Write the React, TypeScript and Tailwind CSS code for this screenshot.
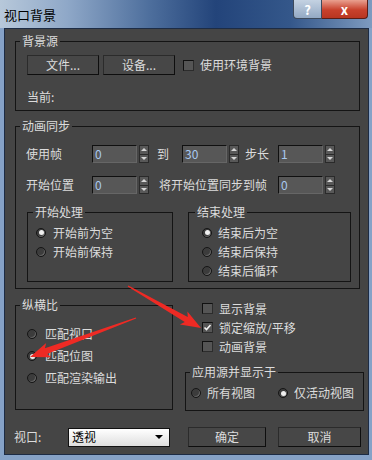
import React from 'react';

const Tri = ({ dir }: { dir: 'up' | 'down' }) =>
  dir === 'up' ? (
    <span className="w-0 h-0 border-x-[3px] border-x-transparent border-b-[3px] border-b-[#d6d6d6]" />
  ) : (
    <span className="w-0 h-0 border-x-[3px] border-x-transparent border-t-[3px] border-t-[#d6d6d6]" />
  );

const Spin = ({ value }: { value: string }) => (
  <div className="flex items-stretch h-[18px]">
    <div className="w-[45px] bg-[#575757] border border-[#101010] border-r-[#666] border-b-[#666] text-[12px] leading-[15px] pl-[2px] text-[#a8c9f0]">
      {value}
    </div>
    <div className="ml-[2px] w-[10px] flex flex-col bg-[#585858] border border-[#2a2a2a]">
      <div className="flex-1 flex items-center justify-center">
        <Tri dir="up" />
      </div>
      <div className="h-px bg-[#2a2a2a]" />
      <div className="flex-1 flex items-center justify-center">
        <Tri dir="down" />
      </div>
    </div>
  </div>
);

const Check = ({ on }: { on?: boolean }) => (
  <div className="w-[11px] h-[11px] shrink-0 bg-[#555] border border-[#111] border-r-[#2c2c2c] border-b-[#2c2c2c] flex items-center justify-center">
    {on && (
      <svg width="9" height="9" viewBox="0 0 9 9">
        <path d="M1.5 4.5 L3.5 6.5 L7.5 2" stroke="#f2f2f2" strokeWidth="1.6" fill="none" />
      </svg>
    )}
  </div>
);

const Radio = ({ on }: { on?: boolean }) => (
  <div className="w-[10px] h-[10px] shrink-0 rounded-full bg-[#3c3c3c] border border-[#151515] shadow-[inset_-1px_-1px_0_#666] flex items-center justify-center">
    {on && <div className="w-[5px] h-[5px] rounded-full bg-[#f0f0f0]" />}
  </div>
);

const Btn = ({ w, children }: { w: string; children: React.ReactNode }) => (
  <div
    className={`${w} h-[20px] shrink-0 bg-[#474747] border border-[#2b2b2b] border-r-[#0e0e0e] border-b-[#0e0e0e] flex items-center justify-center text-[12px] leading-[16px] text-[#dcdcdc]`}
  >
    {children}
  </div>
);

const Legend = ({ ml, children }: { ml: string; children: React.ReactNode }) => (
  <legend className={`${ml} px-[2px] text-[12px] leading-[16px] text-[#dcdcdc]`}>{children}</legend>
);

// 红色标注箭头
const Arrow = ({ x1, y1, x2, y2 }: { x1: number; y1: number; x2: number; y2: number }) => {
  const L = Math.hypot(x2 - x1, y2 - y1);
  const a = (Math.atan2(y2 - y1, x2 - x1) * 180) / Math.PI;
  const pts = `0,-0.6 ${L - 17},-3 ${L - 20},-7.5 ${L},0 ${L - 20},7.5 ${L - 17},3 0,0.6`;
  return <polygon points={pts} fill="#ee2a24" transform={`translate(${x1} ${y1}) rotate(${a})`} />;
};

export default function App() {
  return (
    <div className="relative w-[372px] h-[460px] overflow-hidden bg-[#86a2c7] font-['Microsoft_YaHei','Noto_Sans_CJK_SC','Noto_Sans',sans-serif] text-[#dcdcdc]">
      {/* 标题栏 */}
      <div className="h-[28px] flex items-start justify-between bg-[linear-gradient(90deg,#b7c8da_0%,#8fa8c8_18%,#4e6f9d_40%,#23447a_58%,#34578a_78%,#7e9bc0_100%)]">
        <div className="pl-[4px] pt-[6px] text-[13px] leading-[18px] text-black">视口背景</div>
        <div className="flex mr-[4px]">
          <div className="w-[29px] h-[19px] rounded-bl-[4px] border border-t-0 border-[#3d4a5c] bg-[linear-gradient(180deg,#c4d2e2,#93a9c4)] flex items-center justify-center text-white text-[13px] font-bold leading-none">
            ?
          </div>
          <div className="w-[46px] h-[19px] rounded-br-[4px] border border-t-0 border-l-0 border-[#5a1d16] bg-[linear-gradient(180deg,#e9a08f,#c8412c_55%,#b83520)] flex items-center justify-center text-white text-[13px] font-bold leading-none">
            x
          </div>
        </div>
      </div>

      {/* 对话框主体 */}
      <div className="ml-[4px] w-[365px] h-[427px] border border-[#1d2c45] bg-[#454545] pl-[10px] pt-[4px]">
        {/* 背景源 */}
        <fieldset className="w-[345px] border border-[#141414] px-0 pb-[5px]">
          <Legend ml="ml-[4px]">背景源</Legend>
          <div className="pl-[11px] pt-[6px]">
            <div className="flex items-center">
              <Btn w="w-[72px]">文件...</Btn>
              <div className="ml-[4px]">
                <Btn w="w-[72px]">设备...</Btn>
              </div>
              <div className="ml-[8px]">
                <Check />
              </div>
              <span className="ml-[6px] text-[12px] leading-[16px]">使用环境背景</span>
            </div>
            <div className="mt-[14px] text-[12px] leading-[16px]">当前:</div>
          </div>
        </fieldset>

        {/* 动画同步 */}
        <fieldset className="mt-[7px] w-[345px] border border-[#141414] px-0 pb-[6px]">
          <Legend ml="ml-[4px]">动画同步</Legend>
          <div className="pl-[10px] pt-[11px] text-[12px] leading-[16px]">
            <div className="flex items-center h-[18px]">
              <span className="w-[66px]">使用帧</span>
              <Spin value="0" />
              <span className="ml-[8px]">到</span>
              <div className="ml-[13px]">
                <Spin value="30" />
              </div>
              <span className="ml-[6px]">步长</span>
              <div className="ml-[9px]">
                <Spin value="1" />
              </div>
            </div>
            <div className="flex items-center h-[18px] mt-[13px]">
              <span className="w-[66px]">开始位置</span>
              <Spin value="0" />
              <span className="ml-[10px]">将开始位置同步到帧</span>
              <div className="ml-[11px]">
                <Spin value="0" />
              </div>
            </div>
            <div className="flex mt-[10px]">
              <fieldset className="ml-[1px] w-[146px] border border-[#141414] px-0 pb-[1px]">
                <Legend ml="ml-[5px]">开始处理</Legend>
                <div className="pl-[8px] pt-[3px]">
                  <div className="flex items-center h-[19px]">
                    <Radio on />
                    <span className="ml-[7px]">开始前为空</span>
                  </div>
                  <div className="flex items-center h-[19px]">
                    <Radio />
                    <span className="ml-[7px]">开始前保持</span>
                  </div>
                </div>
              </fieldset>
              <fieldset className="ml-[15px] w-[163px] border border-[#141414] px-0 pb-[1px]">
                <Legend ml="ml-[6px]">结束处理</Legend>
                <div className="pl-[13px] pt-[3px]">
                  <div className="flex items-center h-[19px]">
                    <Radio on />
                    <span className="ml-[6px]">结束后为空</span>
                  </div>
                  <div className="flex items-center h-[19px]">
                    <Radio />
                    <span className="ml-[6px]">结束后保持</span>
                  </div>
                  <div className="flex items-center h-[19px]">
                    <Radio />
                    <span className="ml-[6px]">结束后循环</span>
                  </div>
                </div>
              </fieldset>
            </div>
          </div>
        </fieldset>

        {/* 纵横比 + 右侧选项 */}
        <div className="flex items-start mt-[8px] text-[12px] leading-[16px]">
          <fieldset className="w-[158px] border border-[#141414] px-0 pb-[20px]">
            <Legend ml="ml-[4px]">纵横比</Legend>
            <div className="pl-[11px] pt-[10px]">
              <div className="flex items-center h-[22px]">
                <Radio />
                <span className="ml-[8px]">匹配视口</span>
              </div>
              <div className="flex items-center h-[22px]">
                <Radio on />
                <span className="ml-[8px]">匹配位图</span>
              </div>
              <div className="flex items-center h-[22px]">
                <Radio />
                <span className="ml-[8px]">匹配渲染输出</span>
              </div>
            </div>
          </fieldset>
          <div className="ml-[12px] w-[179px]">
            <div className="pl-[17px] mt-[2px]">
              <div className="flex items-center h-[19px]">
                <Check />
                <span className="ml-[6px]">显示背景</span>
              </div>
              <div className="flex items-center h-[19px]">
                <Check on />
                <span className="ml-[6px]">锁定缩放/平移</span>
              </div>
              <div className="flex items-center h-[19px]">
                <Check />
                <span className="ml-[6px]">动画背景</span>
              </div>
            </div>
            <fieldset className="mt-[8px] w-[179px] border border-[#141414] px-0 pb-[7px]">
              <Legend ml="ml-[4px]">应用源并显示于</Legend>
              <div className="pl-[5px] pt-[3px] flex items-center h-[23px]">
                <Radio />
                <span className="ml-[6px]">所有视图</span>
                <div className="ml-[23px]">
                  <Radio on />
                </div>
                <span className="ml-[6px]">仅活动视图</span>
              </div>
            </fieldset>
          </div>
        </div>

        {/* 底部 */}
        <div className="flex items-center h-[20px] mt-[16px] -ml-[1px] text-[12px] leading-[16px]">
          <span className="w-[54px]">视口:</span>
          <div className="w-[102px] h-[19px] border border-[#111] bg-[linear-gradient(180deg,#ffffff,#dedede)] flex items-center justify-between pl-[3px] pr-[6px] text-black">
            <span>透视</span>
            <span className="w-0 h-0 border-x-[4px] border-x-transparent border-t-[4px] border-t-black" />
          </div>
          <div className="ml-[18px]">
            <Btn w="w-[78px]">确定</Btn>
          </div>
          <div className="ml-[12px]">
            <Btn w="w-[83px]">取消</Btn>
          </div>
        </div>
      </div>

      {/* 标注箭头 */}
      <svg className="absolute inset-0 pointer-events-none" width="372" height="460" viewBox="0 0 372 460">
        <Arrow x1={128} y1={286} x2={201} y2={328} />
        <Arrow x1={136} y1={318} x2={30} y2={357} />
      </svg>
    </div>
  );
}
